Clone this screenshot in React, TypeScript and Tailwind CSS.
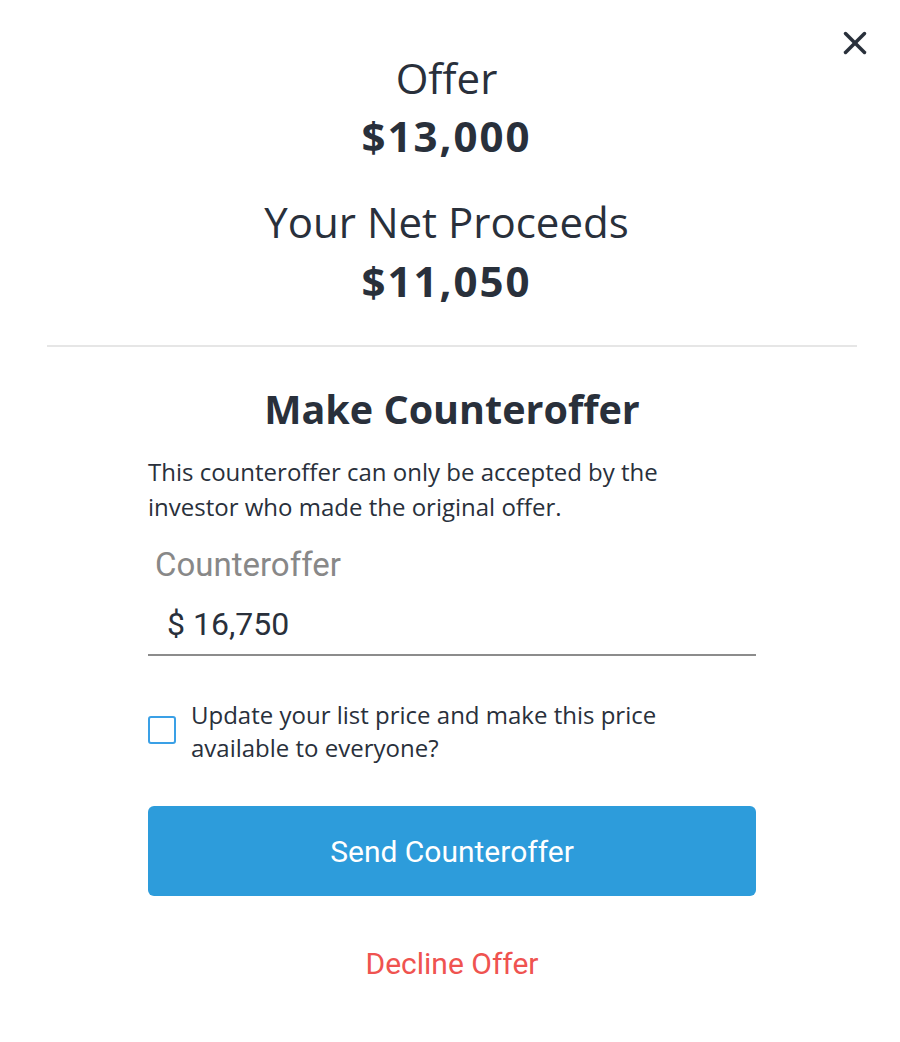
import { X } from 'lucide-react';

export default function App() {
  return (
    <div className="relative w-[900px] h-[1042px] bg-white text-[#29303b] font-['Open_Sans',sans-serif]">
      <button className="absolute top-[24px] right-[26px] text-[#29303b]">
        <X size={38} strokeWidth={2.2} />
      </button>

      <div className="pt-[51px] pr-[7px] flex flex-col items-center">
        <div className="text-[42px] leading-[54px]">Offer</div>
        <div className="text-[42px] leading-[61px] font-bold tracking-[2px]">$13,000</div>
        <div className="mt-[29px] text-[42px] leading-[54px]">Your Net Proceeds</div>
        <div className="text-[42px] leading-[63px] font-bold tracking-[2px]">$11,050</div>
      </div>

      <div className="mt-[33px] ml-[47px] mr-[43px] h-[2px] bg-[#e6e6e6]" />

      <div className="w-[608px] ml-[148px]">
        <h2 className="mt-[37px] text-center text-[39.5px] leading-[50px] font-bold">Make Counteroffer</h2>
        <p className="mt-[20px] max-w-[560px] text-[24px] leading-[35px]">
          This counteroffer can only be accepted by the investor who made the original offer.
        </p>

        <div className="mt-[21px] font-['Roboto',sans-serif]">
          <div className="pl-[7px] text-[33px] leading-[40px] text-[#888888]">Counteroffer</div>
          <div className="mt-[19px] pl-[19px] pb-[10px] text-[32px] leading-[40px] border-b-2 border-[#8c8c8c]">
            $ 16,750
          </div>
        </div>

        <label className="mt-[42px] flex items-start gap-[15px]">
          <span className="mt-[18px] w-[28px] h-[28px] shrink-0 rounded-[3px] border-2 border-[#3aa0e6]" />
          <span className="max-w-[520px] text-[24px] leading-[33px]">
            Update your list price and make this price available to everyone?
          </span>
        </label>

        <button className="mt-[42px] w-full h-[90px] rounded-[6px] bg-[#2d9cdb] text-white text-[30px] font-['Roboto',sans-serif]">
          Send Counteroffer
        </button>

        <div className="mt-[48px] text-center text-[30px] leading-[40px] text-[#ef5350] font-['Roboto',sans-serif]">
          Decline Offer
        </div>
      </div>
    </div>
  );
}
